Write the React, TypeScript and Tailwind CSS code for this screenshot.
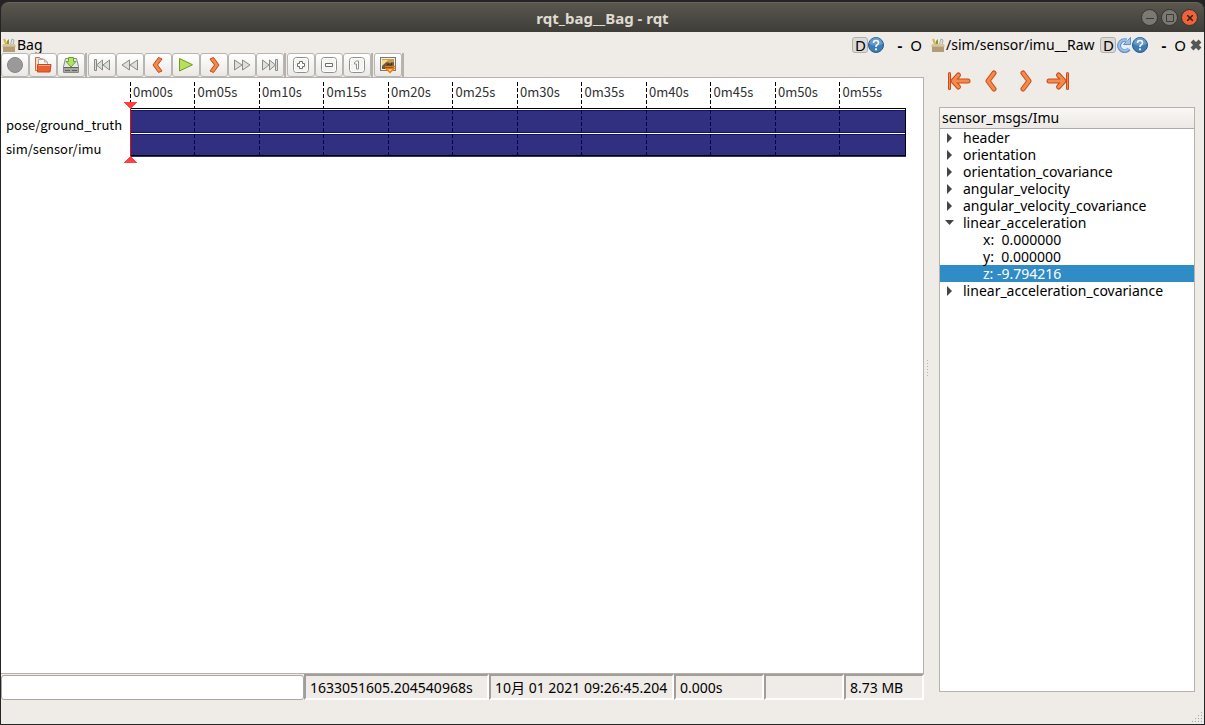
import React from 'react';

interface IconProps {
  className?: string;
}

const RecordIcon: React.FC<IconProps> = () => (
  <svg width="18" height="18" viewBox="0 0 18 18">
    <circle cx="9" cy="9" r="7.5" fill="#9a9a9a" stroke="#858585" />
  </svg>
);

const OpenIcon: React.FC<IconProps> = () => (
  <svg width="18" height="18" viewBox="0 0 18 18">
    <path d="M1.500 14.500v-13h4l1 1.500h3v11z" fill="#f6dccf" stroke="#d2683f" />
    <path d="M4.500 3.500h6l3 2.500v7h-9z" fill="#f8f8f7" stroke="#b5a9a2" />
    <path d="M10.500 3.500v2.500h3" fill="none" stroke="#b5a9a2" />
    <path d="M3.500 8.500h13.500l-1 7.500h-12.500z" fill="#ea6030" stroke="#c9481c" />
    <path d="M4.500 9.500h11.500" stroke="#f7a584" />
  </svg>
);

const SaveIcon: React.FC<IconProps> = () => (
  <svg width="18" height="18" viewBox="0 0 18 18">
    <path d="M3.500 2.500h11l2 8v6h-15v-6z" fill="#e6e8e5" stroke="#888a85" />
    <path d="M2 11.500h14v4.500h-14z" fill="#a3a5a1" />
    <path d="M1.500 11.500h15M3 14.500h5M10 14.500h5" stroke="#60625e" />
    <path d="M6.500 1.500h5v4h2.500l-5 5.500-5-5.500h2.500z" fill="#b4e364" stroke="#6aa621" />
  </svg>
);

const SkipIcon: React.FC<IconProps> = ({ className }) => (
  <svg width="18" height="18" viewBox="0 0 18 18" className={className}>
    <g fill="#dfe0de" stroke="#888a85">
      <path d="M1.500 3.500h2v11h-2z" />
      <path d="M9.500 4v10l-6-5z" />
      <path d="M16.500 4v10l-6.500-5z" />
    </g>
  </svg>
);

const SeekIcon: React.FC<IconProps> = ({ className }) => (
  <svg width="18" height="18" viewBox="0 0 18 18" className={className}>
    <g fill="#dfe0de" stroke="#888a85">
      <path d="M8.500 4v10l-7.500-5z" />
      <path d="M16.500 4v10l-7.500-5z" />
    </g>
  </svg>
);

const StepIcon: React.FC<IconProps> = ({ className }) => (
  <svg width="18" height="18" viewBox="0 0 18 18" className={className}>
    <path d="M9.500 1.500l3.500 1.500-4.500 6 4.500 6-3.500 1.500-5.500-7.500z" fill="#f08a4b" stroke="#cb4314" strokeLinejoin="round" />
  </svg>
);

const PlayIcon: React.FC<IconProps> = () => (
  <svg width="18" height="18" viewBox="0 0 18 18">
    <path d="M2.500 2.500v12.500l13-6.250z" fill="#b5e05c" stroke="#6a9c1c" strokeLinejoin="round" />
  </svg>
);

const ZoomFrame: React.FC<{ children: React.ReactNode }> = ({ children }) => (
  <svg width="18" height="18" viewBox="0 0 18 18">
    <rect x="1.500" y="1.500" width="15" height="15" rx="3" fill="#f4f4f3" stroke="#8e908c" />
    <rect x="2.500" y="2.500" width="13" height="13" rx="2" fill="none" stroke="#ffffff" />
    {children}
  </svg>
);

const ZoomInIcon: React.FC<IconProps> = () => (
  <ZoomFrame>
    <path d="M7.500 5.500h3v2h2v3h-2v2h-3v-2h-2v-3h2z" fill="#ffffff" stroke="#6c6e6a" />
  </ZoomFrame>
);

const ZoomOutIcon: React.FC<IconProps> = () => (
  <ZoomFrame>
    <path d="M5.500 7.500h7v3h-7z" fill="#ffffff" stroke="#6c6e6a" />
  </ZoomFrame>
);

const ZoomHomeIcon: React.FC<IconProps> = () => (
  <ZoomFrame>
    <path d="M6.500 6.500l2-1.500h2v8h-2v-5h-2z" fill="#ffffff" stroke="#8e908c" />
  </ZoomFrame>
);

const ThumbnailIcon: React.FC<IconProps> = () => (
  <svg width="18" height="18" viewBox="0 0 18 18">
    <rect x="1.500" y="1.500" width="15" height="13" fill="#eeeeec" stroke="#777974" />
    <rect x="3" y="3" width="12" height="10" fill="#6b5b3c" />
    <path d="M3 3h12v3l-4 1-3-1-5 3z" fill="#d09a4c" />
    <path d="M3 4h6l-6 6z" fill="#f5d98c" />
    <path d="M5 13l4-6 2 2 2-3v7z" fill="#3c3a34" />
    <path d="M6 10.500h10" stroke="#f57900" strokeWidth="1.500" />
    <path d="M7 12.500h8l-4 4z" fill="#fce3c4" stroke="#f57900" strokeWidth="1.500" />
  </svg>
);

const ToolboxIcon: React.FC<IconProps> = () => (
  <svg width="14" height="16" viewBox="0 0 14 16" className="shrink-0">
    <path d="M2 2l3 7" stroke="#dcb23c" strokeWidth="2" />
    <path d="M5 4l2-2v7H5z" fill="#7a9a4a" />
    <path d="M8 9l2-7 2 1-1 6" fill="#e3e4e2" stroke="#a8aaa5" />
    <path d="M1 7h12l1 3H0z" fill="#d6c4a0" />
    <path d="M1 9h12v6H1z" fill="#b39c76" />
    <path d="M1 9.500h12" stroke="#cdb78f" />
  </svg>
);

const HelpIcon: React.FC<IconProps> = () => (
  <svg width="16" height="16" viewBox="0 0 16 16">
    <circle cx="8" cy="8" r="7.500" fill="#3f7cb5" stroke="#245a90" />
    <path d="M1.500 7a6.500 6.500 0 0 1 13 0q-6 3-13 0z" fill="#669cca" />
    <path d="M5.500 6q0-2.500 2.500-2.500t2.500 2.200q0 1.300-1.300 2T8 10" fill="none" stroke="#ffffff" strokeWidth="1.600" />
    <circle cx="8" cy="12.300" r="1.100" fill="#ffffff" />
  </svg>
);

const ReloadIcon: React.FC<IconProps> = () => (
  <svg width="16" height="16" viewBox="0 0 16 16">
    <path d="M13 12A5.500 5.500 0 1 1 10.500 3.500" fill="none" stroke="#5b92cf" strokeWidth="4" />
    <path d="M14.500 0.500v7h-7z" fill="#9cc1ea" stroke="#5b92cf" />
    <path d="M12.500 11.800A5.300 5.300 0 1 1 10.500 3.500l1.500 1.500" fill="none" stroke="#9cc1ea" strokeWidth="2" />
  </svg>
);

const CloseIcon: React.FC<IconProps> = () => (
  <svg width="12" height="12" viewBox="0 0 12 12">
    <path d="M2 2l8 8M10 2l-8 8" stroke="#555753" strokeWidth="4" />
  </svg>
);

const ChevronIcon: React.FC<IconProps> = ({ className }) => (
  <svg width="22" height="22" viewBox="0 0 22 22" className={className}>
    <path d="M14 3l-6 8 6 8" fill="none" stroke="#cc4a18" strokeWidth="5" strokeLinecap="round" strokeLinejoin="round" />
    <path d="M14 3l-6 8 6 8" fill="none" stroke="#f08c4c" strokeWidth="3" strokeLinecap="round" strokeLinejoin="round" />
  </svg>
);

const EndArrowIcon: React.FC<IconProps> = ({ className }) => (
  <svg width="24" height="22" viewBox="0 0 24 22" className={className}>
    <g fill="none" strokeLinecap="round" strokeLinejoin="round">
      <path d="M2.500 3.500v15" stroke="#cc4a18" strokeWidth="3" />
      <path d="M11.500 5l-5.500 6 5.500 6M8 11h13" stroke="#cc4a18" strokeWidth="5" />
      <path d="M11.500 5l-5.500 6 5.500 6M8 11h13" stroke="#f08c4c" strokeWidth="3" />
      <path d="M2.500 3.500v15" stroke="#f08c4c" />
    </g>
  </svg>
);

interface ToolbarAction {
  name: string;
  icon: React.ReactNode;
}

const toolbarGroups: ToolbarAction[][] = [
  [
    { name: 'Record', icon: <RecordIcon /> },
    { name: 'Load Bag', icon: <OpenIcon /> },
    { name: 'Save Bag', icon: <SaveIcon /> }
  ],
  [
    { name: 'Go to beginning', icon: <SkipIcon /> },
    { name: 'Slower', icon: <SeekIcon /> },
    { name: 'Previous', icon: <StepIcon /> },
    { name: 'Play', icon: <PlayIcon /> },
    { name: 'Next', icon: <StepIcon className="rotate-180" /> },
    { name: 'Faster', icon: <SeekIcon className="rotate-180" /> },
    { name: 'Go to end', icon: <SkipIcon className="rotate-180" /> }
  ],
  [
    { name: 'Zoom in', icon: <ZoomInIcon /> },
    { name: 'Zoom out', icon: <ZoomOutIcon /> },
    { name: 'Zoom home', icon: <ZoomHomeIcon /> }
  ],
  [{ name: 'Toggle thumbnails', icon: <ThumbnailIcon /> }]
];

const ticks = ['0m00s', '0m05s', '0m10s', '0m15s', '0m20s', '0m25s', '0m30s', '0m35s', '0m40s', '0m45s', '0m50s', '0m55s'];
const duration = 60.16;

interface TreeRow {
  label: string;
  state: 'closed' | 'open' | 'leaf';
  selected?: boolean;
}

const treeRows: TreeRow[] = [
  { label: 'header', state: 'closed' },
  { label: 'orientation', state: 'closed' },
  { label: 'orientation_covariance', state: 'closed' },
  { label: 'angular_velocity', state: 'closed' },
  { label: 'angular_velocity_covariance', state: 'closed' },
  { label: 'linear_acceleration', state: 'open' },
  { label: 'x:  0.000000', state: 'leaf' },
  { label: 'y:  0.000000', state: 'leaf' },
  { label: 'z: -9.794216', state: 'leaf', selected: true },
  { label: 'linear_acceleration_covariance', state: 'closed' }
];

const TitleBar: React.FC = () => (
  <header className="flex h-[30px] items-center rounded-t-lg border-t border-[#696659] bg-linear-to-b from-[#59574e] to-[#3e3d38] px-[6px]">
    <div className="w-[60px]" />
    <h1 className="flex-1 text-center font-['Noto_Sans',sans-serif] text-[15px] leading-4 font-bold text-[#dfdbd2]">rqt_bag__Bag - rqt</h1>
    <div className="flex w-[60px] justify-end gap-[3px]">
      <button aria-label="Minimize" className="flex size-[17px] items-center justify-center rounded-full border border-[#33322e] bg-[#7b7a72]">
        <svg width="8" height="8"><path d="M0 4.500h8" stroke="#3c3b37" /></svg>
      </button>
      <button aria-label="Maximize" className="flex size-[17px] items-center justify-center rounded-full border border-[#33322e] bg-[#7b7a72]">
        <svg width="8" height="8"><path d="M0.500 0.500h7v7h-7z" fill="none" stroke="#3c3b37" /></svg>
      </button>
      <button aria-label="Close" className="flex size-[17px] items-center justify-center rounded-full border border-[#33322e] bg-[#ee6338]">
        <svg width="6" height="6"><path d="M0 0l6 6M6 0l-6 6" stroke="#3c1a10" strokeWidth="1.500" /></svg>
      </button>
    </div>
  </header>
);

const DockButton: React.FC = () => (
  <button aria-label="Dock options" className="flex size-4 items-center justify-center rounded-[3px] border border-[#b3afab] bg-[#dedad7]">D</button>
);

const Timeline: React.FC = () => (
  <div className="flex min-h-0 flex-1 border-y border-r border-[#b6b2ae] bg-white pt-1 pr-[17px] font-['Noto_Sans_CJK_JP',sans-serif] text-[13px]">
    <ul className="w-[129px] pt-[31px] pl-[5px] leading-6">
      <li>pose/ground_truth</li>
      <li>sim/sensor/imu</li>
    </ul>
    <svg className="h-[84px] flex-1 overflow-visible" shapeRendering="crispEdges">
      <rect x="0" y="26" width="100%" height="1" fill="#000000" />
      <rect x="0" y="28" width="100%" height="23" fill="#302f80" />
      <rect x="0" y="28" width="100%" height="1" fill="#12116b" />
      <rect x="0" y="50" width="100%" height="1" fill="#12116b" />
      <rect x="0" y="52" width="100%" height="23" fill="#302f80" />
      <rect x="0" y="52" width="100%" height="1" fill="#12116b" />
      <rect x="0" y="73" width="100%" height="1" fill="#000000" />
      <svg x="100%" overflow="visible">
        <path d="M-0.500 26v48" stroke="#000000" />
      </svg>
      {ticks.map((tick, i) => (
        <svg key={tick} x={`${(i * 500) / duration}%`} overflow="visible">
          <path d="M0.500 0v26" stroke="#000000" strokeDasharray="4 2" />
          <path d="M0.500 28v46" stroke="#00004f" strokeDasharray="4 2" />
          <text x="3" y="15" fill="#303030">{tick}</text>
        </svg>
      ))}
      <path d="M0.500 26v50" stroke="#e01010" />
      <path d="M-6 20h13l-6 7h-1zM-6 81h13l-6-7h-1z" fill="#ff4040" />
    </svg>
  </div>
);

const StatusBar: React.FC = () => (
  <footer className="flex h-[26px] shrink-0 text-sm [&>output]:border-2 [&>output]:border-t-[#a19d99] [&>output]:border-l-[#a19d99] [&>output]:border-r-white [&>output]:border-b-white [&>output]:px-1 [&>output]:leading-6 [&>output]:overflow-hidden [&>output]:whitespace-nowrap">
    <input aria-label="Playback progress" readOnly className="mt-px min-w-0 flex-1 rounded-[3px] border border-[#aaa6a2] bg-white" />
    <output className="w-[185px]">1633051605.204540968s</output>
    <output className="w-[185px]">10月 01 2021 09:26:45.204</output>
    <output className="w-[90px]">0.000s</output>
    <output className="w-[80px]" />
    <output className="w-[80px]">8.73 MB</output>
  </footer>
);

const BagDock: React.FC = () => (
  <section className="flex min-w-0 flex-1 flex-col pt-[5px] pb-6">
    <div className="flex h-4 items-center pl-px text-[15px] leading-4">
      <ToolboxIcon />
      <h2 className="ml-px flex-1 text-sm leading-4">Bag</h2>
      <DockButton />
      <button aria-label="Help"><HelpIcon /></button>
      <button aria-label="Minimize dock" className="ml-[13px] font-bold">-</button>
      <button aria-label="Undock" className="mr-[2px] ml-2">O</button>
    </div>
    <div className="flex h-6">
      {toolbarGroups.map((group) => (
        <div key={group[0].name} className="mr-px flex border-r-2 border-[#b5b1ad]">
          {group.map((action) => (
            <button
              key={action.name}
              aria-label={action.name}
              className="flex w-7 items-center justify-center rounded-[3px] border border-[#b9b5b1] bg-linear-to-b from-white to-[#ebe8e5]"
            >
              {action.icon}
            </button>
          ))}
        </div>
      ))}
    </div>
    <Timeline />
    <StatusBar />
  </section>
);

const RawDock: React.FC = () => (
  <section className="flex w-[273px] flex-col pt-[5px] pb-8">
    <div className="flex h-4 items-center text-[15px] leading-4">
      <ToolboxIcon />
      <h2 className="ml-px min-w-0 flex-1 whitespace-nowrap text-sm leading-4">/sim/sensor/imu__Raw</h2>
      <DockButton />
      <button aria-label="Reload"><ReloadIcon /></button>
      <button aria-label="Help"><HelpIcon /></button>
      <button aria-label="Minimize dock" className="ml-[13px] font-bold">-</button>
      <button aria-label="Undock" className="ml-2">O</button>
      <button aria-label="Close dock" className="mr-[2px] ml-1"><CloseIcon /></button>
    </div>
    <nav className="flex h-[54px] items-center px-4 pt-[2px]">
      <button aria-label="First message"><EndArrowIcon /></button>
      <button aria-label="Previous message" className="ml-[9px]"><ChevronIcon /></button>
      <button aria-label="Next message" className="ml-[13px]"><ChevronIcon className="rotate-180" /></button>
      <button aria-label="Last message" className="ml-[9px]"><EndArrowIcon className="rotate-180" /></button>
    </nav>
    <div className="mr-[9px] ml-2 flex-1 border border-[#b6b2ae] bg-white text-sm">
      <h3 className="h-[21px] border-b border-[#aeaaa6] bg-linear-to-b from-[#faf8f6] to-[#ebe8e5] pl-[2px] leading-5">sensor_msgs/Imu</h3>
      <ul role="tree">
        {treeRows.map((row) => (
          <li
            key={row.label}
            role="treeitem"
            aria-selected={!!row.selected}
            className={`flex h-[17px] items-center whitespace-pre leading-[17px] ${row.selected ? 'bg-[#308cc6] text-white' : ''}`}
          >
            <svg width="20" height="10" className="shrink-0">
              {row.state === 'closed' && <path d="M7 0l5 5-5 5z" fill="#444444" />}
              {row.state === 'open' && <path d="M5 2h9l-4.500 5z" fill="#444444" />}
            </svg>
            <span className={row.state === 'leaf' ? 'pl-[23px]' : 'pl-[3px]'}>{row.label}</span>
          </li>
        ))}
      </ul>
    </div>
  </section>
);

export default function App() {
  return (
    <div className="flex h-screen flex-col bg-[#252326] px-px pt-[2px] pb-px font-['Noto_Sans','Noto_Sans_CJK_JP',sans-serif] text-black">
      <TitleBar />
      <main className="flex min-h-0 flex-1 bg-[#efebe7]">
        <BagDock />
        <div className="flex w-[7px] items-center justify-center pb-5">
          <svg width="3" height="18">
            <path d="M1.500 1v17" stroke="#b6b2ae" strokeDasharray="1 2" />
          </svg>
        </div>
        <div className="relative flex">
          <RawDock />
          <svg width="12" height="12" className="absolute right-0 bottom-0">
            <path d="M9.500 0v12M6.500 3v9M3.500 6v6M0.500 9v3" stroke="#a8a4a0" strokeDasharray="1 2" />
          </svg>
        </div>
      </main>
    </div>
  );
}
